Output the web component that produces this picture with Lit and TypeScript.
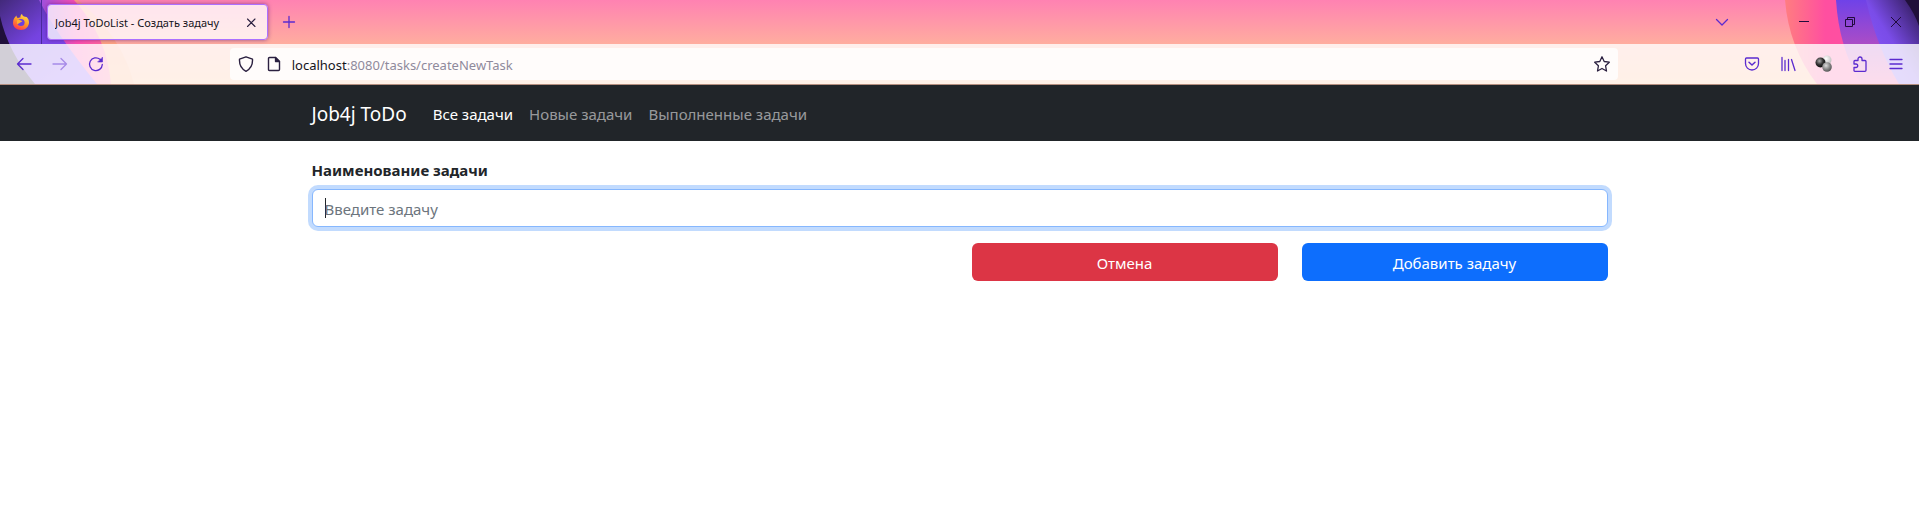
import { LitElement, html, css, svg } from "lit";
import { customElement, state } from "lit/decorators.js";

const fontStack = css`"Noto Sans", "Open Sans", sans-serif`;

@customElement("browser-chrome")
export class BrowserChrome extends LitElement {
  static styles = css`
    :host {
      display: block;
      position: relative;
      overflow: hidden;
      font-family: ${fontStack};
      color: #15141a;
      background: linear-gradient(#ff82b2, #ffad9f 44px, #ffb888);
      border-bottom: 1px solid #b58f80;
    }
    .art {
      position: absolute;
      top: 0;
      height: 84px;
    }
    .art-left { left: 0; width: 140px; }
    .art-right { right: 0; width: 200px; }
    button {
      border: 0;
      padding: 0;
      background: none;
      color: #5b2bcf;
      display: grid;
      place-items: center;
      flex: none;
    }
    svg { display: block; }
    .tabs {
      position: relative;
      display: flex;
      align-items: center;
      height: 44px;
    }
    .home {
      width: 42px;
      height: 44px;
      border-right: 1px solid #4a2a9c;
      margin-right: 5px;
    }
    .tab {
      box-sizing: border-box;
      display: flex;
      align-items: center;
      width: 221px;
      height: 36px;
      padding: 2px 8px 0 7px;
      border: 1px solid #ac70ff;
      border-radius: 4px;
      background: rgba(255, 255, 255, 0.78);
      box-shadow: 0 0 4px rgba(80, 20, 120, 0.6);
      font-size: 11px;
      line-height: 16px;
    }
    .title { flex: 1; white-space: nowrap; overflow: hidden; }
    .tab button { width: 16px; height: 24px; color: #2b2040; }
    .new { width: 42px; height: 36px; }
    .grow { flex: 1; }
    .list { width: 36px; height: 36px; margin-right: 41px; }
    .win { width: 46px; height: 44px; color: #200b3c; }
    .toolbar {
      position: relative;
      display: flex;
      align-items: center;
      height: 40px;
      padding: 0 5px 0 6px;
      background: rgba(255, 255, 255, 0.8);
    }
    .tool { width: 36px; height: 36px; }
    .faded { opacity: 0.45; }
    .url {
      flex: 12;
      display: flex;
      align-items: center;
      height: 32px;
      border-radius: 4px;
      background: rgba(255, 255, 255, 0.8);
      font-size: 13px;
      line-height: 20px;
    }
    .url button { color: #2b2040; width: 28px; height: 28px; }
    .url .star { width: 32px; }
    .shield { margin-left: 2px; }
    .address { flex: 1; margin-left: 4px; padding-top: 2px; color: #8f8a9c; }
    .host { color: #15141a; }
  `;

  private icon(body: unknown, size = 16) {
    return html`<svg width=${size} height=${size} viewBox="0 0 16 16" fill="none" stroke="currentColor"
      stroke-width="1.3" stroke-linecap="round" stroke-linejoin="round" aria-hidden="true">${body}</svg>`;
  }

  render() {
    return html`
      <svg class="art art-left" viewBox="0 0 140 84" aria-hidden="true">
        <defs>
          <linearGradient id="violet" x1="0" y1="0" x2="1" y2="1">
            <stop offset="0" stop-color="#42297a" /><stop offset=".4" stop-color="#7543e0" /><stop offset="1" stop-color="#8b50ff" />
          </linearGradient>
          <linearGradient id="rose" x1="0" y1="0" x2="1" y2="0">
            <stop offset=".35" stop-color="#9a50e0" /><stop offset=".7" stop-color="#ff4fb0" /><stop offset="1" stop-color="#ff6f98" />
          </linearGradient>
        </defs>
        <path d="M0 0H78Q122 36 134 84H0Z" fill="#ffa070" opacity=".6" />
        <path d="M0 0H74Q107 36 111 84H0Z" fill="url(#rose)" />
        <path d="M0 0H39Q56 34 97 84H0Z" fill="url(#violet)" />
        <path d="M0 16Q8 52 35 84H0Z" fill="#20103a" />
      </svg>
      <svg class="art art-right" viewBox="0 0 200 84" aria-hidden="true">
        <defs>
          <linearGradient id="coral" x1="0" y1="0" x2="1" y2="0">
            <stop offset="0" stop-color="#ff7d80" /><stop offset=".3" stop-color="#ff4fa0" /><stop offset="1" stop-color="#ff4fa8" />
          </linearGradient>
          <linearGradient id="plum" x1="0" y1="0" x2="0" y2="1">
            <stop offset="0" stop-color="#6f42e8" /><stop offset=".5" stop-color="#a84cc8" /><stop offset="1" stop-color="#f050a0" />
          </linearGradient>
          <linearGradient id="dusk" x1="1" y1="0" x2="0" y2="1">
            <stop offset="0" stop-color="#2c1850" /><stop offset=".5" stop-color="#7a4ce8" /><stop offset="1" stop-color="#8a5cff" />
          </linearGradient>
        </defs>
        <path d="M66 0Q70 48 98 84H200V0Z" fill="url(#coral)" />
        <path d="M117 0Q120 48 142 84H200V0Z" fill="url(#plum)" />
        <path d="M147 0Q158 48 180 84H200V0Z" fill="url(#dusk)" />
        <path d="M186 0Q196 14 200 26V0Z" fill="#20103a" />
      </svg>

      <div class="tabs">
        <button class="home" aria-label="Firefox View">
          <svg width="18" height="18" viewBox="0 0 18 18" aria-hidden="true">
            <defs><linearGradient id="fire" x1=".8" y1="0" x2=".3" y2="1">
              <stop offset="0" stop-color="#ffe24a" /><stop offset=".5" stop-color="#ff9a28" /><stop offset="1" stop-color="#ff3350" />
            </linearGradient></defs>
            <path d="M10 1C10 3 12.500 4 14.500 4C16 5 17 7 17 9.500C17 13.500 13.500 17 9 17C4.500 17 1 14 1 10C1 6 3 4 4.500 2.500C4.500 4 5 5 6 5C7 4.500 8 4.500 8.500 4.500C8 3 9 1.500 10 1Z" fill="url(#fire)" />
            <circle cx="9" cy="9.500" r="3.600" fill="#6a3fe0" />
            <path d="M5 7.500C7 6.500 8 7.500 10.500 8C9.500 9.500 8 9 7 10.500L5 11Z" fill="#ffb030" />
          </svg>
        </button>
        <div class="tab">
          <span class="title">Job4j ToDoList - Создать задачу</span>
          <button aria-label="Закрыть вкладку">${this.icon(svg`<path d="M4.500 4l7.500 7.500M12 4l-7.500 7.500" stroke-width="1.100" />`)}</button>
        </div>
        <button class="new" aria-label="Новая вкладка">${this.icon(svg`<path d="M8 2.500v11M2.500 8h11" />`)}</button>
        <span class="grow"></span>
        <button class="list" aria-label="Список вкладок">${this.icon(svg`<path d="M2.500 5.500L8 11l5.500-5.500" />`)}</button>
        <button class="win" aria-label="Свернуть">
          <svg width="10" height="10" viewBox="0 0 10 10" stroke="currentColor"><path d="M0 4.500h10" /></svg>
        </button>
        <button class="win" aria-label="Восстановить">
          <svg width="10" height="10" viewBox="0 0 10 10" fill="none" stroke="currentColor"><path d="M.5 2.500h7v7h-7zM2.500 2.500v-2h7v7h-2" /></svg>
        </button>
        <button class="win" aria-label="Закрыть">
          <svg width="10" height="10" viewBox="0 0 10 10" stroke="currentColor"><path d="M0 0l10 10M10 0L0 10" /></svg>
        </button>
      </div>

      <div class="toolbar">
        <button class="tool" aria-label="Назад">${this.icon(svg`<path d="M15 8H1.500M7 2.500L1.500 8L7 13.500" />`)}</button>
        <button class="tool faded" aria-label="Вперёд">${this.icon(svg`<path d="M1 8h13.500M9 2.500L14.500 8L9 13.500" />`)}</button>
        <button class="tool" aria-label="Обновить">
          ${this.icon(svg`<path d="M14.300 8.500A6.400 6.400 0 1 1 12 3.300L13 4.300" /><path d="M14.500 1.500V6H10Z" fill="currentColor" stroke-width=".6" />`)}
        </button>
        <span class="grow"></span>
        <div class="url">
          <button class="shield" aria-label="Защита">${this.icon(svg`<path d="M8 .8L14.500 3.200C14.800 8.500 12.500 13 8 15.300C3.500 13 1.200 8.500 1.500 3.200Z" stroke-width="1.400" />`)}</button>
          <button aria-label="Сведения о сайте">${this.icon(svg`<path d="M3.500 1.500H9.500L13.500 5.500V13.500Q13.500 14.500 12.500 14.500H3.500Q2.500 14.500 2.500 13.500V2.500Q2.500 1.500 3.500 1.500Z" stroke-width="1.400" /><path d="M9.500 1.500V5.500H13.500Z" fill="currentColor" />`)}</button>
          <span class="address"><span class="host">localhost</span>:8080/tasks/createNewTask</span>
          <button class="star" aria-label="Добавить в закладки">${this.icon(svg`<path d="M8 .8L10.200 5.500L15.300 6.200L11.600 9.800L12.500 15L8 12.500L3.500 15L4.400 9.800L.7 6.200L5.800 5.500Z" />`)}</button>
        </div>
        <span class="grow"></span>
        <button class="tool" aria-label="Pocket">${this.icon(svg`<path d="M2.500 2H13.500Q14.500 2 14.500 3V7.500A6.500 6.500 0 0 1 1.500 7.500V3Q1.500 2 2.500 2Z" /><path d="M5 6.200L8 9L11 6.200" stroke-width="1.500" />`)}</button>
        <button class="tool" aria-label="Библиотека">${this.icon(svg`<path d="M2 1.500v13M5 4.500v10M8.500 3.500v11M11.500 3.500L15 14.500" />`)}</button>
        <button class="tool" aria-label="Расширение">
          <svg width="18" height="18" viewBox="0 0 18 18" aria-hidden="true">
            <defs>
              <radialGradient id="b1" cx=".4" cy=".35" r=".6"><stop offset="0" stop-color="#aaa" /><stop offset=".6" stop-color="#333" /><stop offset="1" stop-color="#111" /></radialGradient>
              <radialGradient id="b2" cx=".4" cy=".35" r=".7"><stop offset="0" stop-color="#fff" /><stop offset="1" stop-color="#bbb" /></radialGradient>
              <radialGradient id="b3" cx=".4" cy=".35" r=".65"><stop offset="0" stop-color="#ddd" /><stop offset=".6" stop-color="#888" /><stop offset="1" stop-color="#555" /></radialGradient>
            </defs>
            <circle cx="12" cy="5" r="4.500" fill="url(#b2)" />
            <circle cx="5.500" cy="7.500" r="5" fill="url(#b1)" />
            <circle cx="12" cy="12" r="4.800" fill="url(#b3)" />
          </svg>
        </button>
        <button class="tool" aria-label="Расширения">${this.icon(svg`<path d="M2 14.500V11.500H4A1.700 1.700 0 0 0 4 8H2V5.500Q2 4.500 3 4.500H6V3A2 2 0 0 1 10 3V4.500H13Q14 4.500 14 5.500V14.300Q14 15.300 13 15.300H2.800Q2 15.300 2 14.500Z" />`)}</button>
        <button class="tool" aria-label="Меню">${this.icon(svg`<path d="M2 3.500h12M2 8h12M2 12.500h12" />`)}</button>
      </div>
    `;
  }
}

@customElement("site-nav")
export class SiteNav extends LitElement {
  static styles = css`
    :host {
      display: block;
      background: #212529;
      font-family: ${fontStack};
      padding: 9px 0 7px;
    }
    nav {
      box-sizing: border-box;
      display: flex;
      align-items: center;
      max-width: 1320px;
      margin: 0 auto;
      padding: 0 12px;
      min-height: 40px;
    }
    a { text-decoration: none; color: rgba(255, 255, 255, 0.55); }
    .brand { color: #fff; font-size: 19px; line-height: 30px; margin-right: 18px; }
    .link { padding: 8px; font-size: 15px; line-height: 24px; }
    .active { color: #fff; }
  `;

  private links = ["Все задачи", "Новые задачи", "Выполненные задачи"];

  render() {
    return html`<nav>
      <a class="brand" href="#">Job4j ToDo</a>
      ${this.links.map((text, i) => html`<a class="link ${i === 0 ? "active" : ""}" href="#">${text}</a>`)}
    </nav>`;
  }
}

@customElement("task-form")
export class TaskForm extends LitElement {
  static styles = css`
    :host { display: block; font-family: ${fontStack}; color: #212529; }
    form {
      box-sizing: border-box;
      max-width: 1320px;
      margin: 0 auto;
      padding: 17px 12px;
      font-size: 15px;
      line-height: 24px;
    }
    label { display: block; font-weight: 700; margin-bottom: 7px; }
    input {
      box-sizing: border-box;
      display: block;
      width: 100%;
      height: 38px;
      padding: 7px 12px 5px;
      border: 1px solid #86b7fe;
      border-radius: 6px;
      outline: 0;
      background: #fff;
      box-shadow: 0 0 0 4px rgba(13, 110, 253, 0.25);
      color: inherit;
      font: inherit;
    }
    .blank {
      background: linear-gradient(#212529, #212529) 12px center / 1px 20px no-repeat #fff;
      caret-color: transparent;
    }
    input::placeholder { color: #6c757d; opacity: 1; }
    .actions {
      display: grid;
      grid-template-columns: repeat(4, 1fr);
      gap: 24px;
      margin-top: 16px;
    }
    button {
      height: 38px;
      padding: 2px 12px 0;
      border: 0;
      border-radius: 6px;
      color: #fff;
      font: inherit;
    }
    .cancel { grid-column: 3; background: #dc3545; }
    .submit { background: #0d6efd; }
  `;

  @state() private name = "";

  render() {
    return html`<form @submit=${(e: Event) => e.preventDefault()}>
      <label for="name">Наименование задачи</label>
      <input id="name" class=${this.name ? "" : "blank"} type="text" placeholder="Введите задачу" .value=${this.name}
        @input=${(e: InputEvent) => (this.name = (e.target as HTMLInputElement).value)} />
      <div class="actions">
        <button class="cancel" type="button">Отмена</button>
        <button class="submit" type="submit">Добавить задачу</button>
      </div>
    </form>`;
  }
}

@customElement("app-root")
export class AppRoot extends LitElement {
  static styles = css`
    :host { display: block; min-height: 100vh; background: #fff; }
  `;

  render() {
    return html`<browser-chrome></browser-chrome><site-nav></site-nav><task-form></task-form>`;
  }
}
